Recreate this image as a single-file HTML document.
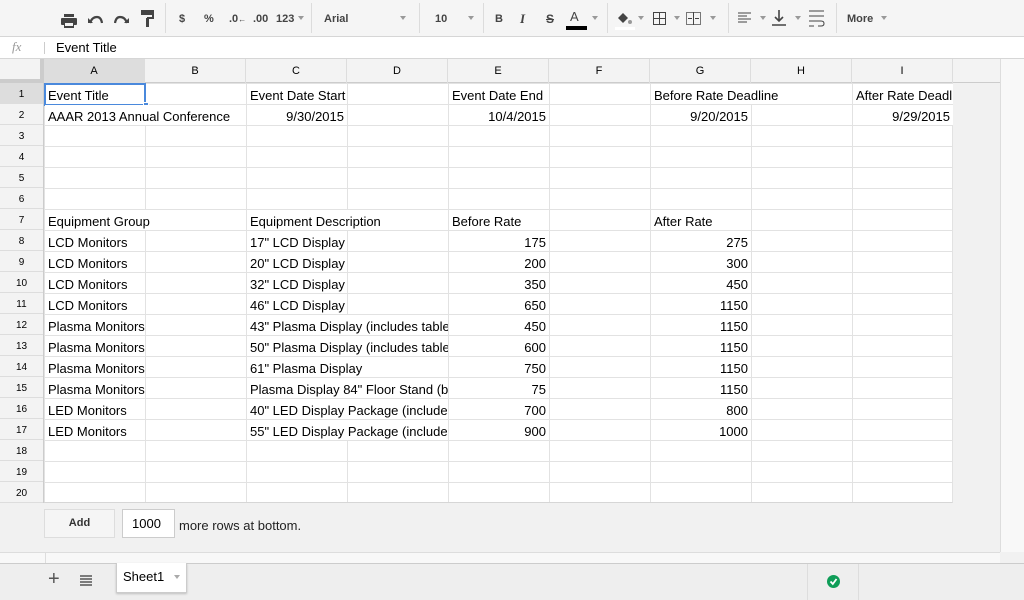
<!DOCTYPE html><html><head><style>
*{margin:0;padding:0;box-sizing:border-box}
body{width:1024px;height:600px;overflow:hidden;background:#f1f1f1;font-family:"Liberation Sans",Arial,sans-serif;position:relative;color:#000}
.a{position:absolute}
.tb{left:0;top:0;width:1024px;height:37px;background:#f5f5f5;border-bottom:1px solid #d6d6d6}
.tbi{position:absolute;left:0;top:3px;width:1024px;height:30px}
.sep{position:absolute;top:3px;width:1px;height:30px;background:#dcdcdc}
.ic{position:absolute;top:10px;font-size:11px;font-weight:bold;color:#444}
.dd{position:absolute;top:13px;width:0;height:0;border-left:3px solid transparent;border-right:3px solid transparent;border-top:4px solid #999}
.fb{left:0;top:37px;width:1024px;height:22px;background:#fff;border-bottom:1px solid #d6d6d6}
.grid{left:44px;top:83px;width:909px;height:420px;background:#fff;
background-image:linear-gradient(to right,#e2e2e2 1px,transparent 1px),linear-gradient(to bottom,#e2e2e2 1px,transparent 1px);
background-size:101px 21px;border-right:1px solid #e2e2e2;border-bottom:1px solid #d6d6d6}
.ch{left:44px;top:59px;width:909px;height:24px;background:#f3f3f3;border-bottom:1px solid #ccc}
.ch div{position:absolute;top:0;width:101px;height:24px;line-height:24px;text-align:center;font-size:11px;border-right:1px solid #ddd}
.rh{left:0;top:83px;width:44px;height:420px;background:#f3f3f3;border-right:1px solid #ccc}
.rh div{position:absolute;left:0;width:43px;height:21px;line-height:24px;text-align:center;font-size:10px;border-bottom:1px solid #ddd}
.c{position:absolute;height:20px;line-height:23px;font-size:13px;background:#fff;white-space:nowrap;overflow:hidden;padding:0 3px}
.r{text-align:right}
</style></head><body>
<div class="a tb">
<div class="sep" style="left:165px"></div><div class="sep" style="left:311px"></div><div class="sep" style="left:419px"></div><div class="sep" style="left:483px"></div><div class="sep" style="left:607px"></div><div class="sep" style="left:728px"></div><div class="sep" style="left:836px"></div>
<div class="tbi">
<svg class="a" style="left:61px;top:11px" width="16" height="14"><rect x="3" y="0" width="10" height="3" fill="#444"/><rect x="0" y="4" width="16" height="7" rx="1" fill="#444"/><rect x="3" y="8" width="10" height="6" fill="#444"/><rect x="4" y="9" width="8" height="3" fill="#f5f5f5"/></svg>
<svg class="a" style="left:88px;top:12px" width="15" height="10"><path d="M2 8 Q4 2 9 2 Q13 2 14 8" stroke="#444" stroke-width="2.2" fill="none"/><path d="M0 3 L5 8 L0 8Z" fill="#444"/></svg>
<svg class="a" style="left:114px;top:12px" width="15" height="10"><path d="M13 8 Q11 2 6 2 Q2 2 1 8" stroke="#444" stroke-width="2.2" fill="none"/><path d="M15 3 L10 8 L15 8Z" fill="#444"/></svg>
<svg class="a" style="left:141px;top:7px" width="14" height="17"><rect x="0" y="0" width="13" height="5" fill="#444"/><rect x="11" y="2" width="2" height="6" fill="#444"/><rect x="6" y="7" width="7" height="2" fill="#444"/><rect x="5" y="8" width="3" height="9" fill="#444"/></svg>
<div class="ic" style="left:179px">$</div><div class="ic" style="left:204px">%</div>
<div class="ic" style="left:229px">.0<span style="font-size:8px">←</span></div>
<div class="ic" style="left:253px">.00</div><div class="ic" style="left:276px">123</div><div class="dd" style="left:298px"></div>
<div class="ic" style="left:324px">Arial</div><div class="dd" style="left:400px"></div>
<div class="ic" style="left:435px">10</div><div class="dd" style="left:468px"></div>
<div class="ic" style="left:495px">B</div>
<div class="ic" style="left:520px;font-style:italic;font-family:'Liberation Serif',serif;font-size:13px;top:8px">I</div>
<div class="ic" style="left:546px;text-decoration:line-through;font-size:12px;top:9px">S</div>
<div class="ic" style="left:570px;font-size:13px;top:6px;font-weight:normal">A</div>
<div class="a" style="left:566px;top:23px;width:21px;height:4px;background:#000"></div><div class="dd" style="left:592px"></div>
<svg class="a" style="left:615px;top:7px" width="20" height="20"><path d="M3 8 L8 3 L13 8 L8 13Z" fill="#444"/><circle cx="15" cy="12" r="2" fill="#999"/><rect x="0" y="17" width="20" height="3" fill="#fff"/></svg><div class="dd" style="left:638px"></div>
<svg class="a" style="left:653px;top:9px" width="14" height="14"><rect x=".5" y=".5" width="12" height="12" fill="none" stroke="#444"/><path d="M6.5 0V13M0 6.5H13" stroke="#444"/></svg><div class="dd" style="left:674px"></div>
<svg class="a" style="left:686px;top:9px" width="16" height="14"><rect x=".5" y=".5" width="14" height="12" fill="none" stroke="#777"/><path d="M7.5 0V13M2 6.5H6M9 6.5H13" stroke="#444"/></svg><div class="dd" style="left:710px"></div>
<svg class="a" style="left:738px;top:9px" width="14" height="12"><path d="M0 1H13M0 4H9M0 7H13M0 10H9" stroke="#444"/></svg><div class="dd" style="left:760px"></div>
<svg class="a" style="left:772px;top:7px" width="14" height="17"><path d="M7 0V11M3 7L7 11L11 7M0 15H14" stroke="#444" stroke-width="1.6" fill="none"/></svg><div class="dd" style="left:795px"></div>
<svg class="a" style="left:809px;top:7px" width="16" height="18"><path d="M0 1H15M0 6H15M0 11H12Q15 11 15 13.5Q15 16 12 16H9M0 16H5" stroke="#444" fill="none"/></svg>
<div class="ic" style="left:847px">More</div><div class="dd" style="left:881px"></div>
</div>
</div>
<div class="a fb"><div class="a" style="left:12px;top:2px;font-style:italic;color:#999;font-size:13px;font-family:'Liberation Serif',serif">fx</div><div class="a" style="left:44px;top:5px;width:1px;height:12px;background:#ccc"></div><div class="a" style="left:56px;top:3px;font-size:13px">Event Title</div></div>
<div class="a" style="left:0;top:59px;width:44px;height:24px;background:#f3f3f3;border-right:4px solid #ccc;border-bottom:4px solid #ccc"></div>
<div class="a ch"><div style="left:0;background:#ddd">A</div><div style="left:101px">B</div><div style="left:202px">C</div><div style="left:303px">D</div><div style="left:404px">E</div><div style="left:505px">F</div><div style="left:606px">G</div><div style="left:707px">H</div><div style="left:808px">I</div></div>
<div class="a" style="left:953px;top:59px;width:47px;height:24px;background:#f3f3f3;border-bottom:1px solid #ccc"></div>
<div class="a" style="left:1000px;top:59px;width:24px;height:493px;background:#f8f8f8;border-left:1px solid #ddd"></div>
<div class="a rh">
<div style="top:0;background:#ddd">1</div><div style="top:21px">2</div><div style="top:42px">3</div><div style="top:63px">4</div><div style="top:84px">5</div><div style="top:105px">6</div><div style="top:126px">7</div><div style="top:147px">8</div><div style="top:168px">9</div><div style="top:189px">10</div><div style="top:210px">11</div><div style="top:231px">12</div><div style="top:252px">13</div><div style="top:273px">14</div><div style="top:294px">15</div><div style="top:315px">16</div><div style="top:336px">17</div><div style="top:357px">18</div><div style="top:378px">19</div><div style="top:399px">20</div></div>
<div class="a grid"></div>
<div class="c" style="left:45px;top:84px;width:100px">Event Title</div>
<div class="c" style="left:247px;top:84px;width:100px">Event Date Start</div>
<div class="c" style="left:449px;top:84px;width:100px">Event Date End</div>
<div class="c" style="left:651px;top:84px;width:201px">Before Rate Deadline</div>
<div class="c" style="left:853px;top:84px;width:100px;padding-right:0">After Rate Deadline</div>
<div class="a" style="left:44px;top:83px;width:102px;height:23px;border:2px solid #4a89dc"></div>
<div class="a" style="left:143px;top:102px;width:6px;height:6px;background:#4a89dc;border:1px solid #fff"></div>
<div class="c" style="left:45px;top:105px;width:201px">AAAR 2013 Annual Conference</div>
<div class="c r" style="left:247px;top:105px;width:100px">9/30/2015</div>
<div class="c r" style="left:449px;top:105px;width:100px">10/4/2015</div>
<div class="c r" style="left:651px;top:105px;width:100px">9/20/2015</div>
<div class="c r" style="left:853px;top:105px;width:100px">9/29/2015</div>
<div class="c" style="left:45px;top:210px;width:201px">Equipment Group</div>
<div class="c" style="left:247px;top:210px;width:201px">Equipment Description</div>
<div class="c" style="left:449px;top:210px;width:100px">Before Rate</div>
<div class="c" style="left:651px;top:210px;width:100px">After Rate</div>
<div class="c" style="left:45px;top:231px;width:100px">LCD Monitors</div><div class="c" style="left:247px;top:231px;width:100px">17" LCD Display</div><div class="c r" style="left:449px;top:231px;width:100px">175</div><div class="c r" style="left:651px;top:231px;width:100px">275</div>
<div class="c" style="left:45px;top:252px;width:100px">LCD Monitors</div><div class="c" style="left:247px;top:252px;width:100px">20" LCD Display</div><div class="c r" style="left:449px;top:252px;width:100px">200</div><div class="c r" style="left:651px;top:252px;width:100px">300</div>
<div class="c" style="left:45px;top:273px;width:100px">LCD Monitors</div><div class="c" style="left:247px;top:273px;width:100px">32" LCD Display</div><div class="c r" style="left:449px;top:273px;width:100px">350</div><div class="c r" style="left:651px;top:273px;width:100px">450</div>
<div class="c" style="left:45px;top:294px;width:100px">LCD Monitors</div><div class="c" style="left:247px;top:294px;width:100px">46" LCD Display</div><div class="c r" style="left:449px;top:294px;width:100px">650</div><div class="c r" style="left:651px;top:294px;width:100px">1150</div>
<div class="c" style="left:45px;top:315px;width:100px">Plasma Monitors</div><div class="c" style="left:247px;top:315px;width:201px;padding-right:0">43" Plasma Display (includes table top stand)</div><div class="c r" style="left:449px;top:315px;width:100px">450</div><div class="c r" style="left:651px;top:315px;width:100px">1150</div>
<div class="c" style="left:45px;top:336px;width:100px">Plasma Monitors</div><div class="c" style="left:247px;top:336px;width:201px;padding-right:0">50" Plasma Display (includes table top stand)</div><div class="c r" style="left:449px;top:336px;width:100px">600</div><div class="c r" style="left:651px;top:336px;width:100px">1150</div>
<div class="c" style="left:45px;top:357px;width:100px">Plasma Monitors</div><div class="c" style="left:247px;top:357px;width:201px">61" Plasma Display</div><div class="c r" style="left:449px;top:357px;width:100px">750</div><div class="c r" style="left:651px;top:357px;width:100px">1150</div>
<div class="c" style="left:45px;top:378px;width:100px">Plasma Monitors</div><div class="c" style="left:247px;top:378px;width:201px;padding-right:0">Plasma Display 84" Floor Stand (b</div><div class="c r" style="left:449px;top:378px;width:100px">75</div><div class="c r" style="left:651px;top:378px;width:100px">1150</div>
<div class="c" style="left:45px;top:399px;width:100px">LED Monitors</div><div class="c" style="left:247px;top:399px;width:201px;padding-right:0">40" LED Display Package (includes stand)</div><div class="c r" style="left:449px;top:399px;width:100px">700</div><div class="c r" style="left:651px;top:399px;width:100px">800</div>
<div class="c" style="left:45px;top:420px;width:100px">LED Monitors</div><div class="c" style="left:247px;top:420px;width:201px;padding-right:0">55" LED Display Package (includes stand)</div><div class="c r" style="left:449px;top:420px;width:100px">900</div><div class="c r" style="left:651px;top:420px;width:100px">1000</div>
<div class="a" style="left:44px;top:509px;width:71px;height:29px;border:1px solid #ddd;background:#f5f5f5;font-size:11px;font-weight:bold;color:#333;text-align:center;line-height:27px">Add</div>
<div class="a" style="left:122px;top:509px;width:53px;height:29px;border:1px solid #ccc;background:#fff;font-size:13px;padding-left:9px;line-height:27px">1000</div>
<div class="a" style="left:179px;top:518px;font-size:13px;color:#222">more rows at bottom.</div>
<div class="a" style="left:0;top:552px;width:1000px;height:12px;background:#f8f8f8;border-top:1px solid #ddd"></div>
<div class="a" style="left:45px;top:552px;width:1px;height:12px;background:#ddd"></div>
<div class="a" style="left:0;top:563px;width:1024px;height:37px;background:#eee;border-top:1px solid #ccc"></div>
<div class="a" style="left:48px;top:568px;font-size:20px;color:#555">+</div>
<svg class="a" style="left:80px;top:575px" width="12" height="11"><path d="M0 1H12M0 4H12M0 7H12M0 10H12" stroke="#555" stroke-width="1.5"/></svg>
<div class="a" style="left:116px;top:563px;width:71px;height:30px;background:#fff;border:1px solid #ccc;border-top:none;box-shadow:0 1px 2px rgba(0,0,0,.2)"><span class="a" style="left:6px;top:6px;font-size:13px">Sheet1</span><span class="a" style="left:57px;top:12px;border-left:3px solid transparent;border-right:3px solid transparent;border-top:4px solid #aaa"></span></div>
<div class="a" style="left:807px;top:564px;width:1px;height:36px;background:#ddd"></div>
<div class="a" style="left:858px;top:564px;width:1px;height:36px;background:#ddd"></div>
<svg class="a" style="left:827px;top:575px" width="13" height="13"><circle cx="6.5" cy="6.5" r="6.5" fill="#0f9d58"/><path d="M3.5 6.5L5.8 9L9.5 4" stroke="#fff" stroke-width="1.8" fill="none"/></svg>
</body></html>
